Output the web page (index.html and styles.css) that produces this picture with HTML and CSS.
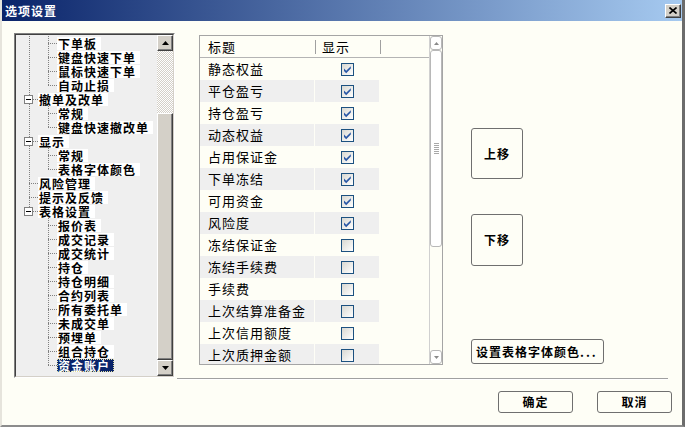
FILE: index.html
```html
<!DOCTYPE html>
<html lang="zh-CN">
<head>
<meta charset="utf-8">
<title>选项设置</title>
<link rel="stylesheet" href="styles.css">
</head>
<body>
<div class="win">
  <div class="titlebar">
    <span class="title">选项设置</span>
    <span class="close"><svg width="8" height="7" viewBox="0 0 8 7"><path d="M0.5 0.5 L7.5 6.5 M7.5 0.5 L0.5 6.5" stroke="#000" stroke-width="1.6" fill="none"/></svg></span>
  </div>
  <div class="content">
    <div class="main">
      <div class="tree">
        <div class="tree-in">
          <div class="nodes">
            <div class="row"><span class="a pass"></span><span class="b cmid"></span><span class="lbl">下单板</span></div>
            <div class="row"><span class="a pass"></span><span class="b cmid"></span><span class="lbl">键盘快速下单</span></div>
            <div class="row"><span class="a pass"></span><span class="b cmid"></span><span class="lbl">鼠标快速下单</span></div>
            <div class="row"><span class="a pass"></span><span class="b clast"></span><span class="lbl">自动止损</span></div>
            <div class="row"><span class="a rmid"><span class="exp"></span></span><span class="lbl">撤单及改单</span></div>
            <div class="row"><span class="a pass"></span><span class="b cmid"></span><span class="lbl">常规</span></div>
            <div class="row"><span class="a pass"></span><span class="b clast"></span><span class="lbl">键盘快速撤改单</span></div>
            <div class="row"><span class="a rmid"><span class="exp"></span></span><span class="lbl">显示</span></div>
            <div class="row"><span class="a pass"></span><span class="b cmid"></span><span class="lbl">常规</span></div>
            <div class="row"><span class="a pass"></span><span class="b clast"></span><span class="lbl">表格字体颜色</span></div>
            <div class="row"><span class="a rmid"></span><span class="lbl">风险管理</span></div>
            <div class="row"><span class="a rmid"></span><span class="lbl">提示及反馈</span></div>
            <div class="row"><span class="a rlast"><span class="exp"></span></span><span class="lbl">表格设置</span></div>
            <div class="row"><span class="a"></span><span class="b cmid"></span><span class="lbl">报价表</span></div>
            <div class="row"><span class="a"></span><span class="b cmid"></span><span class="lbl">成交记录</span></div>
            <div class="row"><span class="a"></span><span class="b cmid"></span><span class="lbl">成交统计</span></div>
            <div class="row"><span class="a"></span><span class="b cmid"></span><span class="lbl">持仓</span></div>
            <div class="row"><span class="a"></span><span class="b cmid"></span><span class="lbl">持仓明细</span></div>
            <div class="row"><span class="a"></span><span class="b cmid"></span><span class="lbl">合约列表</span></div>
            <div class="row"><span class="a"></span><span class="b cmid"></span><span class="lbl">所有委托单</span></div>
            <div class="row"><span class="a"></span><span class="b cmid"></span><span class="lbl">未成交单</span></div>
            <div class="row"><span class="a"></span><span class="b cmid"></span><span class="lbl">预埋单</span></div>
            <div class="row"><span class="a"></span><span class="b cmid"></span><span class="lbl">组合持仓</span></div>
            <div class="row"><span class="a"></span><span class="b clast"></span><span class="lbl sel">资金账户</span></div>
          </div>
          <div class="tscroll">
            <div class="tbtn"><svg width="7" height="4" viewBox="0 0 7 4"><path d="M3.5 0 L7 4 L0 4 Z" fill="#000"/></svg></div>
            <div class="ttrack"></div>
            <div class="tthumb"></div>
            <div class="tbtn"><svg width="7" height="4" viewBox="0 0 7 4"><path d="M0 0 L7 0 L3.5 4 Z" fill="#000"/></svg></div>
          </div>
        </div>
      </div>

      <div class="list">
        <div class="grid">
          <div class="hdr"><span class="h1">标题</span><span class="hsep"></span><span class="h2">显示</span><span class="hsep"></span></div>
          <div class="lrow"><span class="c1">静态权益</span><span class="c2"><span class="cb on"><svg width="11" height="11" viewBox="0 0 11 11"><path d="M2 4.6 L4.2 6.8 L8.8 2.2 L8.8 4.6 L4.2 9.2 L2 7 Z" fill="#2a58a6"/></svg></span></span></div>
          <div class="lrow alt"><span class="c1">平仓盈亏</span><span class="c2"><span class="cb on"><svg width="11" height="11" viewBox="0 0 11 11"><path d="M2 4.6 L4.2 6.8 L8.8 2.2 L8.8 4.6 L4.2 9.2 L2 7 Z" fill="#2a58a6"/></svg></span></span></div>
          <div class="lrow"><span class="c1">持仓盈亏</span><span class="c2"><span class="cb on"><svg width="11" height="11" viewBox="0 0 11 11"><path d="M2 4.6 L4.2 6.8 L8.8 2.2 L8.8 4.6 L4.2 9.2 L2 7 Z" fill="#2a58a6"/></svg></span></span></div>
          <div class="lrow alt"><span class="c1">动态权益</span><span class="c2"><span class="cb on"><svg width="11" height="11" viewBox="0 0 11 11"><path d="M2 4.6 L4.2 6.8 L8.8 2.2 L8.8 4.6 L4.2 9.2 L2 7 Z" fill="#2a58a6"/></svg></span></span></div>
          <div class="lrow"><span class="c1">占用保证金</span><span class="c2"><span class="cb on"><svg width="11" height="11" viewBox="0 0 11 11"><path d="M2 4.6 L4.2 6.8 L8.8 2.2 L8.8 4.6 L4.2 9.2 L2 7 Z" fill="#2a58a6"/></svg></span></span></div>
          <div class="lrow alt"><span class="c1">下单冻结</span><span class="c2"><span class="cb on"><svg width="11" height="11" viewBox="0 0 11 11"><path d="M2 4.6 L4.2 6.8 L8.8 2.2 L8.8 4.6 L4.2 9.2 L2 7 Z" fill="#2a58a6"/></svg></span></span></div>
          <div class="lrow"><span class="c1">可用资金</span><span class="c2"><span class="cb on"><svg width="11" height="11" viewBox="0 0 11 11"><path d="M2 4.6 L4.2 6.8 L8.8 2.2 L8.8 4.6 L4.2 9.2 L2 7 Z" fill="#2a58a6"/></svg></span></span></div>
          <div class="lrow alt"><span class="c1">风险度</span><span class="c2"><span class="cb on"><svg width="11" height="11" viewBox="0 0 11 11"><path d="M2 4.6 L4.2 6.8 L8.8 2.2 L8.8 4.6 L4.2 9.2 L2 7 Z" fill="#2a58a6"/></svg></span></span></div>
          <div class="lrow"><span class="c1">冻结保证金</span><span class="c2"><span class="cb"></span></span></div>
          <div class="lrow alt"><span class="c1">冻结手续费</span><span class="c2"><span class="cb"></span></span></div>
          <div class="lrow"><span class="c1">手续费</span><span class="c2"><span class="cb"></span></span></div>
          <div class="lrow alt"><span class="c1">上次结算准备金</span><span class="c2"><span class="cb"></span></span></div>
          <div class="lrow"><span class="c1">上次信用额度</span><span class="c2"><span class="cb"></span></span></div>
          <div class="lrow alt"><span class="c1">上次质押金额</span><span class="c2"><span class="cb"></span></span></div>
        </div>
        <div class="vscroll">
          <div class="vbtn"><svg width="5" height="3" viewBox="0 0 5 3"><path d="M2.5 0 L5 3 L0 3 Z" fill="#8a8a8a"/></svg></div>
          <div class="vthumb"><span class="grip"></span></div>
          <div class="vtrack"></div>
          <div class="vbtn"><svg width="5" height="3" viewBox="0 0 5 3"><path d="M0 0 L5 0 L2.5 3 Z" fill="#8a8a8a"/></svg></div>
        </div>
      </div>

      <div class="side">
        <button class="btn up">上移</button>
        <button class="btn down">下移</button>
        <button class="btn font">设置表格字体颜色<span class="dots">...</span></button>
      </div>
    </div>
    <div class="sep"></div>
    <div class="footer">
      <button class="btn foot">确定</button>
      <button class="btn foot">取消</button>
    </div>
  </div>
</div>
</body>
</html>
```

FILE: styles.css
```css
html, body {
  margin: 0;
  padding: 0;
  background: #fefef6;
}

body {
  font-family: "Noto Sans CJK SC", "Noto Sans", sans-serif;
  color: #000;
}

.win {
  width: 685px;
  height: 427px;
  box-sizing: border-box;
  border-left: 2px solid #e6e4dc;
  border-right: 3px solid #6c6c6c;
  border-bottom: 2px solid #8c8c8c;
  background: #fefef6;
  display: flex;
  flex-direction: column;
}

/* title bar */
.titlebar {
  height: 21px;
  flex: none;
  background: linear-gradient(to right, #0a246a, #a6caf0);
  display: flex;
  align-items: center;
  justify-content: space-between;
  padding-left: 3px;
}

.title {
  color: #fff;
  font-weight: bold;
  font-size: 12px;
  letter-spacing: 1px;
  line-height: 14px;
}

.close {
  width: 16px;
  height: 14px;
  box-sizing: border-box;
  margin-right: 1px;
  background: #d4d0c8;
  border: 1px solid;
  border-color: #fff #404040 #404040 #fff;
  box-shadow: inset -1px -1px #808080;
  display: flex;
  align-items: center;
  justify-content: center;
}

/* content */
.content {
  flex: 1;
  padding: 12px 10px 0 12px;
  display: flex;
  flex-direction: column;
}

.main {
  display: flex;
  align-items: flex-start;
  height: 345px;
  flex: none;
}

/* tree */
.tree {
  width: 161px;
  height: 345px;
  box-sizing: border-box;
  border: 1px solid;
  border-color: #808080 #fff #fff #808080;
  flex: none;
}

.tree-in {
  height: 100%;
  box-sizing: border-box;
  border: 1px solid;
  border-color: #404040 #d4d0c8 #d4d0c8 #404040;
  background: #efefef;
  display: flex;
}

.nodes {
  flex: 1;
  padding-top: 1px;
  overflow: hidden;
}

.row {
  display: flex;
  align-items: center;
  height: 14px;
}

.a {
  width: 22px;
  height: 14px;
  flex: none;
  display: flex;
  align-items: center;
  background-repeat: no-repeat;
}

.b {
  width: 19px;
  height: 14px;
  flex: none;
  background-repeat: no-repeat;
}

.pass {
  background-image: repeating-linear-gradient(to bottom, #808080 0 1px, transparent 1px 2px);
  background-size: 1px 14px;
  background-position: 13px 0;
}

.rmid {
  background-image:
    repeating-linear-gradient(to bottom, #808080 0 1px, transparent 1px 2px),
    repeating-linear-gradient(to right, #808080 0 1px, transparent 1px 2px);
  background-size: 1px 14px, 9px 1px;
  background-position: 13px 0, 13px 7px;
}

.rlast {
  background-image:
    repeating-linear-gradient(to bottom, #808080 0 1px, transparent 1px 2px),
    repeating-linear-gradient(to right, #808080 0 1px, transparent 1px 2px);
  background-size: 1px 7px, 9px 1px;
  background-position: 13px 0, 13px 7px;
}

.cmid {
  background-image:
    repeating-linear-gradient(to bottom, #808080 0 1px, transparent 1px 2px),
    repeating-linear-gradient(to right, #808080 0 1px, transparent 1px 2px);
  background-size: 1px 14px, 9px 1px;
  background-position: 10px 0, 10px 7px;
}

.clast {
  background-image:
    repeating-linear-gradient(to bottom, #808080 0 1px, transparent 1px 2px),
    repeating-linear-gradient(to right, #808080 0 1px, transparent 1px 2px);
  background-size: 1px 7px, 9px 1px;
  background-position: 10px 0, 10px 7px;
}

.exp {
  width: 9px;
  height: 9px;
  box-sizing: border-box;
  margin-left: 8px;
  border: 1px solid #808080;
  background: linear-gradient(#000, #000) center / 5px 1px no-repeat, #fff;
}

.lbl {
  font-size: 12px;
  font-weight: bold;
  letter-spacing: 1px;
  line-height: 13px;
  height: 13px;
  background: #fff;
  padding: 0 4px 0 1px;
  white-space: nowrap;
}

.lbl.sel {
  background: #0a246a;
  color: #fff;
  outline: 1px dotted #e4e0a0;
  outline-offset: -1px;
}

/* classic scrollbar */
.tscroll {
  width: 16px;
  flex: none;
  display: flex;
  flex-direction: column;
}

.tbtn,
.tthumb {
  box-sizing: border-box;
  background: #d4d0c8;
  border: 1px solid;
  border-color: #fff #404040 #404040 #fff;
  box-shadow: inset -1px -1px #808080;
}

.tbtn {
  height: 16px;
  display: flex;
  align-items: center;
  justify-content: center;
}

.ttrack {
  height: 62px;
  background: repeating-conic-gradient(#d4d0c8 0 25%, #fff 0 50%) 0 0 / 2px 2px;
}

.tthumb {
  flex: 1;
}

/* list */
.list {
  margin-left: 24px;
  margin-top: 2px;
  width: 244px;
  height: 330px;
  box-sizing: border-box;
  border: 1px solid #a5a5a5;
  display: flex;
  flex: none;
  background: #fefef6;
}

.grid {
  flex: 1;
  overflow: hidden;
}

.hdr {
  height: 21px;
  border-bottom: 1px solid #b4b4b4;
  display: flex;
  align-items: center;
  font-size: 13px;
  letter-spacing: 1px;
  line-height: 21px;
}

.h1 {
  width: 107px;
  padding-left: 8px;
}

.h2 {
  width: 58px;
  padding-left: 6px;
}

.hsep {
  width: 1px;
  height: 14px;
  background: #a0a0a0;
}

.lrow {
  height: 22px;
  display: flex;
}

.c1 {
  width: 106px;
  padding-left: 8px;
  margin-right: 1px;
  line-height: 22px;
  font-size: 13px;
  letter-spacing: 1px;
  white-space: nowrap;
}

.c2 {
  width: 64px;
  display: flex;
  align-items: center;
  justify-content: center;
}

.lrow.alt .c1,
.lrow.alt .c2 {
  background: #efefef;
}

.cb {
  width: 13px;
  height: 13px;
  box-sizing: border-box;
  border: 1px solid #1c5180;
  background: linear-gradient(135deg, #d8d8d2, #fff);
  display: flex;
}

/* XP style scrollbar */
.vscroll {
  width: 13px;
  flex: none;
  box-sizing: border-box;
  display: flex;
  flex-direction: column;
  border-left: 1px solid #d0d0d0;
}

.vbtn {
  height: 14px;
  box-sizing: border-box;
  border: 1px solid #b8b8b8;
  border-radius: 3px;
  background: #fff;
  display: flex;
  align-items: center;
  justify-content: center;
}

.vthumb {
  height: 197px;
  box-sizing: border-box;
  border: 1px solid #b8b8b8;
  border-radius: 3px;
  background: #fff;
  display: flex;
  align-items: center;
  justify-content: center;
}

.grip {
  width: 5px;
  height: 11px;
  background: repeating-linear-gradient(to bottom, #a8a8a8 0 1px, transparent 1px 2px);
}

.vtrack {
  flex: 1;
}

/* buttons */
.side {
  margin-left: 28px;
  display: flex;
  flex-direction: column;
  align-items: flex-start;
  flex: none;
}

.btn {
  box-sizing: border-box;
  border: 1px solid #6f6f6f;
  border-radius: 3px;
  background: #fefef6;
  font-family: "Noto Sans CJK SC", "Noto Sans", sans-serif;
  font-size: 12px;
  font-weight: bold;
  letter-spacing: 1px;
  line-height: 14px;
  color: #000;
  display: flex;
  align-items: center;
  justify-content: center;
  padding: 0;
  margin: 0;
  white-space: nowrap;
}

.up {
  width: 52px;
  height: 51px;
  margin-top: 95px;
}

.down {
  width: 52px;
  height: 52px;
  margin-top: 35px;
}

.font {
  width: 133px;
  height: 25px;
  margin-top: 73px;
  justify-content: flex-start;
  padding-left: 4px;
}

.dots {
  letter-spacing: 2px;
}

.sep {
  margin-left: 163px;
  width: 491px;
  height: 1px;
  background: #a0a0a0;
  border-bottom: 1px solid #fff;
  flex: none;
}

.footer {
  display: flex;
  justify-content: flex-end;
  gap: 24px;
  margin-top: 11px;
}

.foot {
  width: 75px;
  height: 22px;
}
```
